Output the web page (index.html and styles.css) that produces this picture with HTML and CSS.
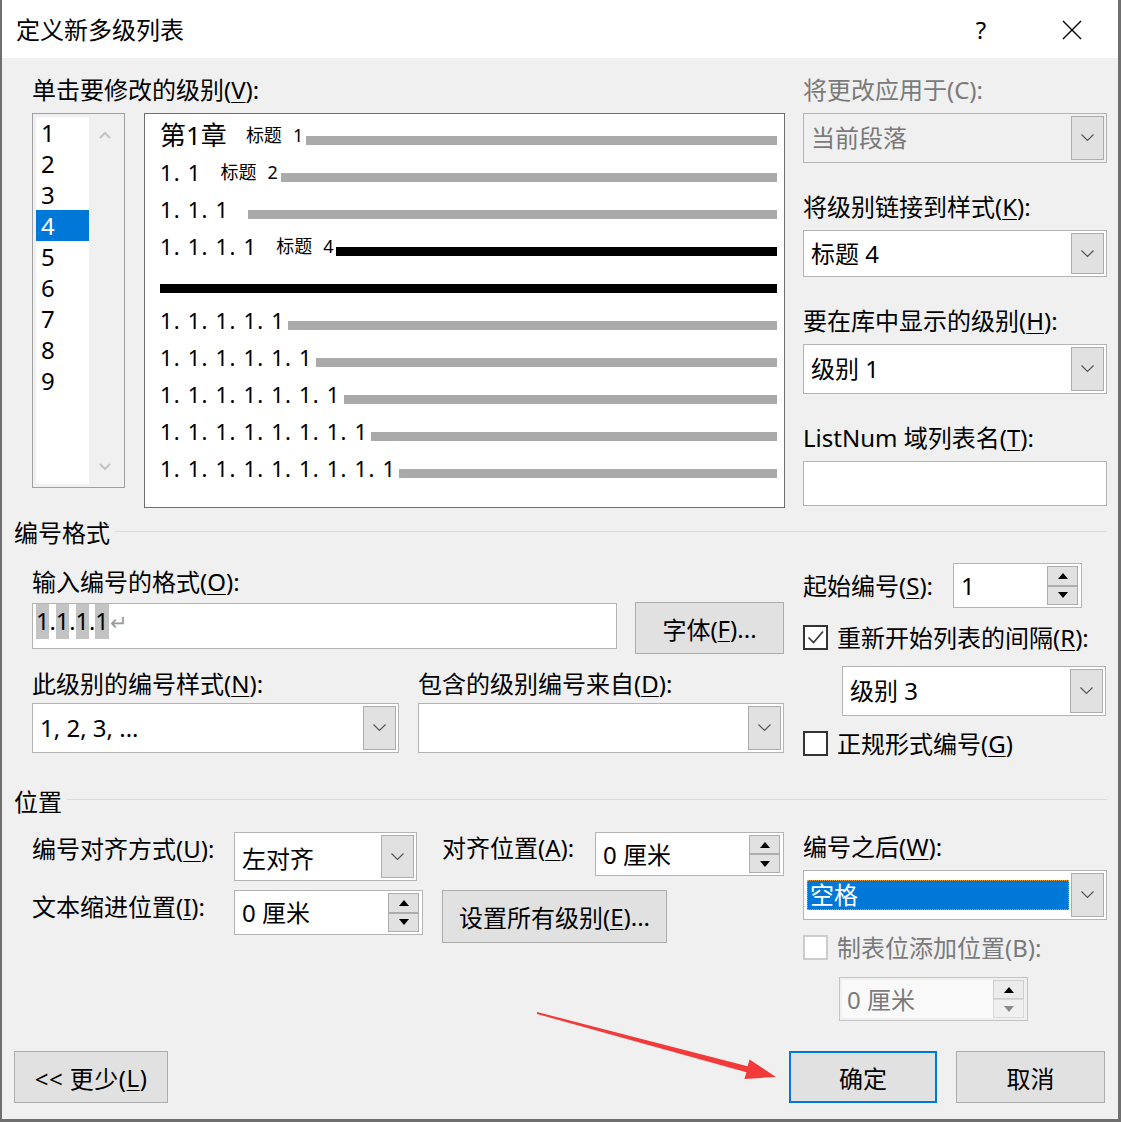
FILE: index.html
```html
<!DOCTYPE html>
<html lang="zh-CN">
  <head>
    <meta charset="UTF-8" />
    <meta name="viewport" content="width=device-width, initial-scale=1.0" />
    <title>定义新多级列表</title>
    <link rel="stylesheet" href="styles.css">
  </head>
  <body>
    <div class="dialog">
      <header class="titlebar">
        <span class="title">定义新多级列表</span>
        <span class="help">?</span>
        <span class="close">
          <svg width="20" height="20" viewBox="0 0 20 20"><path d="M1 1L19 19M19 1L1 19" stroke="#000" stroke-width="1.4" fill="none"/></svg>
        </span>
      </header>

      <main class="content">
        <!-- Level list, preview and style links -->
        <section class="top">
          <div class="col-left">
            <div class="label">单击要修改的级别(<u>V</u>):</div>
            <div class="level-area">
              <div class="listbox">
                <ul class="levels">
                  <li>1</li>
                  <li>2</li>
                  <li>3</li>
                  <li class="selected">4</li>
                  <li>5</li>
                  <li>6</li>
                  <li>7</li>
                  <li>8</li>
                  <li>9</li>
                </ul>
                <div class="scroll">
                  <svg width="12" height="8" viewBox="0 0 12 8"><path d="M1 7L6 2L11 7" stroke="#c3c3c3" stroke-width="2" fill="none"/></svg>
                  <svg width="12" height="8" viewBox="0 0 12 8"><path d="M1 1L6 6L11 1" stroke="#c3c3c3" stroke-width="2" fill="none"/></svg>
                </div>
              </div>
              <div class="preview">
                <div class="pv-row"><span class="pv-chapter">第1章</span><span class="pv-style">标题<span class="pv-lv">1</span></span><span class="bar"></span></div>
                <div class="pv-row"><span class="pv-num">1. 1</span><span class="pv-style">标题<span class="pv-lv">2</span></span><span class="bar"></span></div>
                <div class="pv-row"><span class="pv-num">1. 1. 1</span><span class="bar spaced"></span></div>
                <div class="pv-row"><span class="pv-num">1. 1. 1. 1</span><span class="pv-style">标题<span class="pv-lv">4</span></span><span class="bar current"></span></div>
                <div class="pv-row"><span class="bar current full"></span></div>
                <div class="pv-row"><span class="pv-num">1. 1. 1. 1. 1</span><span class="bar"></span></div>
                <div class="pv-row"><span class="pv-num">1. 1. 1. 1. 1. 1</span><span class="bar"></span></div>
                <div class="pv-row"><span class="pv-num">1. 1. 1. 1. 1. 1. 1</span><span class="bar"></span></div>
                <div class="pv-row"><span class="pv-num">1. 1. 1. 1. 1. 1. 1. 1</span><span class="bar"></span></div>
                <div class="pv-row"><span class="pv-num">1. 1. 1. 1. 1. 1. 1. 1. 1</span><span class="bar"></span></div>
              </div>
            </div>
          </div>

          <div class="col-right">
            <div class="label disabled">将更改应用于(C):</div>
            <div class="combo disabled field">
              <span class="combo-value">当前段落</span>
              <span class="combo-btn"><svg width="13" height="8" viewBox="0 0 13 8"><path d="M0.5 0.5L6.5 6.5L12.5 0.5" stroke="#555" stroke-width="1.2" fill="none"/></svg></span>
            </div>
            <div class="label spaced">将级别链接到样式(<u>K</u>):</div>
            <div class="combo compact field">
              <span class="combo-value">标题 4</span>
              <span class="combo-btn"><svg width="13" height="8" viewBox="0 0 13 8"><path d="M0.5 0.5L6.5 6.5L12.5 0.5" stroke="#555" stroke-width="1.2" fill="none"/></svg></span>
            </div>
            <div class="label spaced">要在库中显示的级别(<u>H</u>):</div>
            <div class="combo field">
              <span class="combo-value">级别 1</span>
              <span class="combo-btn"><svg width="13" height="8" viewBox="0 0 13 8"><path d="M0.5 0.5L6.5 6.5L12.5 0.5" stroke="#555" stroke-width="1.2" fill="none"/></svg></span>
            </div>
            <div class="label spaced">ListNum 域列表名(<u>T</u>):</div>
            <div class="text-input listnum field"></div>
          </div>
        </section>

        <!-- Number format -->
        <div class="section-head first">编号格式</div>
        <section class="format">
          <div class="col-left">
            <div class="label format-label">输入编号的格式(<u>O</u>):</div>
            <div class="format-row">
              <div class="text-input number-format"><span class="hl">1</span>.<span class="hl">1</span>.<span class="hl">1</span>.<span class="hl">1</span><span class="para">↵</span></div>
              <div class="btn font-btn">字体(<u>F</u>)...</div>
            </div>
            <div class="label-row">
              <div class="label style-label">此级别的编号样式(<u>N</u>):</div>
              <div class="label">包含的级别编号来自(<u>D</u>):</div>
            </div>
            <div class="combo-row">
              <div class="combo number-style">
                <span class="combo-value">1, 2, 3, ...</span>
                <span class="combo-btn"><svg width="13" height="8" viewBox="0 0 13 8"><path d="M0.5 0.5L6.5 6.5L12.5 0.5" stroke="#555" stroke-width="1.2" fill="none"/></svg></span>
              </div>
              <div class="combo include-from">
                <span class="combo-value"></span>
                <span class="combo-btn"><svg width="13" height="8" viewBox="0 0 13 8"><path d="M0.5 0.5L6.5 6.5L12.5 0.5" stroke="#555" stroke-width="1.2" fill="none"/></svg></span>
              </div>
            </div>
          </div>

          <div class="col-right">
            <div class="start-row">
              <div class="label start-label">起始编号(<u>S</u>):</div>
              <div class="spin start-spin">
                <span class="spin-value">1</span>
                <span class="spin-btns"><span class="up"></span><span class="down"></span></span>
              </div>
            </div>
            <div class="check restart">
              <span class="box checked"><svg width="21" height="21" viewBox="0 0 21 21"><path d="M3.5 10.5L8.5 15.5L18 4.5" stroke="#333" stroke-width="1.6" fill="none"/></svg></span>
              <span>重新开始列表的间隔(<u>R</u>):</span>
            </div>
            <div class="combo restart-level">
              <span class="combo-value">级别 3</span>
              <span class="combo-btn"><svg width="13" height="8" viewBox="0 0 13 8"><path d="M0.5 0.5L6.5 6.5L12.5 0.5" stroke="#555" stroke-width="1.2" fill="none"/></svg></span>
            </div>
            <div class="check legal">
              <span class="box"></span>
              <span>正规形式编号(<u>G</u>)</span>
            </div>
          </div>
        </section>

        <!-- Position -->
        <div class="section-head second">位置</div>
        <section class="position">
          <div class="col-left">
            <div class="pos-row">
              <div class="label pos-label">编号对齐方式(<u>U</u>):</div>
              <div class="combo align-combo">
                <span class="combo-value">左对齐</span>
                <span class="combo-btn"><svg width="13" height="8" viewBox="0 0 13 8"><path d="M0.5 0.5L6.5 6.5L12.5 0.5" stroke="#555" stroke-width="1.2" fill="none"/></svg></span>
              </div>
              <div class="label pos-label at-label">对齐位置(<u>A</u>):</div>
              <div class="spin at-spin">
                <span class="spin-value">0 厘米</span>
                <span class="spin-btns"><span class="up"></span><span class="down"></span></span>
              </div>
            </div>
            <div class="pos-row second-row">
              <div class="label pos-label indent-label">文本缩进位置(<u>I</u>):</div>
              <div class="spin indent-spin">
                <span class="spin-value">0 厘米</span>
                <span class="spin-btns"><span class="up"></span><span class="down"></span></span>
              </div>
              <div class="btn all-levels">设置所有级别(<u>E</u>)...</div>
            </div>
          </div>

          <div class="col-right">
            <div class="label after-label">编号之后(<u>W</u>):</div>
            <div class="combo follow-combo">
              <span class="combo-value selected">空格</span>
              <span class="combo-btn"><svg width="13" height="8" viewBox="0 0 13 8"><path d="M0.5 0.5L6.5 6.5L12.5 0.5" stroke="#555" stroke-width="1.2" fill="none"/></svg></span>
            </div>
            <div class="check disabled tab-check">
              <span class="box"></span>
              <span>制表位添加位置(B):</span>
            </div>
            <div class="spin disabled tab-spin">
              <span class="spin-value">0 厘米</span>
              <span class="spin-btns"><span class="up"></span><span class="down"></span></span>
            </div>
          </div>
        </section>

        <footer class="footer">
          <div class="btn less">&lt;&lt; 更少(<u>L</u>)</div>
          <div class="btn default ok">确定</div>
          <div class="btn cancel">取消</div>
        </footer>
      </main>
    </div>

    <svg class="arrow" width="1121" height="1122" viewBox="0 0 1121 1122">
      <polygon points="537,1012 747.6,1066.2 749.6,1059.5 776,1077 744.4,1078.9 746.4,1072.2 537,1014" fill="#f23a3a"/>
    </svg>
  </body>
</html>
```

FILE: styles.css
```css
* {
  box-sizing: border-box;
}

body {
  margin: 0;
  position: relative;
  background-color: #fff;
  font-family: "Noto Sans", "Noto Sans CJK SC", sans-serif;
  color: #000;
}

u {
  text-decoration-thickness: 1px;
  text-underline-offset: 3px;
}

.dialog {
  width: 1121px;
  height: 1122px;
  background-color: #f0f0f0;
  border-style: solid;
  border-color: #6f6f6f;
  border-width: 0 3px 3px 2px;
  overflow: hidden;
}

/* Title bar */
.titlebar {
  display: flex;
  align-items: center;
  height: 58px;
  background-color: #fff;
  padding: 2px 23px 0 14px;
}

.title {
  font-size: 24px;
  line-height: 30px;
}

.help {
  margin-left: auto;
  width: 32px;
  text-align: center;
  font-size: 24px;
  line-height: 30px;
}

.close {
  display: flex;
  justify-content: center;
  width: 46px;
  margin-left: 52px;
}

.content {
  padding: 0 11px 0 12px;
}

.label {
  font-size: 24px;
  line-height: 30px;
  white-space: nowrap;
}

.label.disabled,
.check.disabled {
  color: #7a7a7a;
}

.col-left {
  width: 753px;
}

.col-right {
  width: 304px;
  margin-left: 18px;
}

/* Top area */
.top {
  display: flex;
  padding: 17px 0 0 18px;
}

.level-area {
  display: flex;
  align-items: flex-start;
  margin-top: 8px;
}

.listbox {
  display: flex;
  width: 93px;
  height: 375px;
  padding: 3px;
  border: 1px solid #a0a0a0;
  background-color: #f0f0f0;
}

.levels {
  list-style: none;
  margin: 0;
  padding: 0;
  width: 53px;
  background-color: #fff;
}

.levels li {
  height: 31px;
  line-height: 31px;
  font-size: 24px;
  padding-left: 5px;
}

.levels li.selected {
  background-color: #0078d7;
  color: #fff;
}

.scroll {
  flex: 1;
  display: flex;
  flex-direction: column;
  justify-content: space-between;
  align-items: center;
  padding: 14px 0 13px;
}

.scroll svg {
  display: block;
}

.preview {
  width: 641px;
  height: 395px;
  margin-left: 19px;
  padding: 3px 7px 0 15px;
  background-color: #fff;
  border: 1px solid #6e6e6e;
}

.pv-row {
  display: flex;
  align-items: center;
  height: 37px;
  line-height: 37px;
  font-size: 22px;
  white-space: nowrap;
}

.pv-num {
  letter-spacing: 1.2px;
}

.pv-chapter {
  font-size: 26px;
}

.pv-style {
  font-size: 18px;
  margin-left: 19px;
}

.pv-lv {
  margin-left: 11px;
}

.bar {
  flex: 1;
  height: 9px;
  margin: 10px 0 0 3px;
  background-color: #aaa;
}

.bar.spaced {
  margin-left: 19px;
}

.bar.current {
  background-color: #000;
}

.bar.full {
  margin-left: 0;
}

/* Right column fields */
.col-right .field {
  margin-top: 8px;
}

.col-right .label.spaced {
  margin-top: 29px;
}

.combo {
  display: flex;
  height: 50px;
  padding: 2px;
  background-color: #fff;
  border: 1px solid #b4b4b4;
}

.combo.compact {
  height: 47px;
}

.combo.disabled {
  background-color: #f0f0f0;
  color: #7a7a7a;
}

.combo-value {
  flex: 1;
  padding-left: 5px;
  font-size: 24px;
  line-height: 44px;
  white-space: nowrap;
}

.combo.compact .combo-value {
  line-height: 41px;
}

.combo-value.selected {
  margin: 7px 2px 7px 1px;
  padding-left: 3px;
  line-height: 30px;
  background-color: #0078d7;
  color: #fff;
  outline: 1px dotted #e89b3c;
  outline-offset: -1px;
}

.combo-btn {
  display: flex;
  align-items: center;
  justify-content: center;
  width: 33px;
  background-color: #e1e1e1;
  border: 1px solid #adadad;
}

.text-input {
  background-color: #fff;
  border: 1px solid #b4b4b4;
}

.listnum {
  height: 45px;
}

/* Section headings */
.section-head {
  display: flex;
  align-items: center;
  font-size: 24px;
  line-height: 30px;
}

.section-head::after {
  content: "";
  flex: 1;
  height: 1px;
  margin-left: 5px;
  background-color: #dcdcdc;
}

.section-head.first {
  margin-top: 10px;
}

.section-head.first::after {
  margin-bottom: 4px;
}

.section-head.second {
  margin-top: 31px;
}

.section-head.second::after {
  margin-bottom: 6px;
}

/* Number format */
.format,
.position {
  display: flex;
  padding-left: 18px;
}

.format-label {
  margin-top: 19px;
}

.format-row {
  display: flex;
  align-items: flex-start;
  margin-top: 5px;
}

.number-format {
  width: 585px;
  height: 46px;
  margin-top: 1px;
  padding-left: 3px;
  font-size: 23.5px;
  line-height: 35px;
  white-space: nowrap;
}

.hl {
  display: inline-block;
  background-color: #c3c3c3;
  line-height: 35px;
}

.para {
  margin-left: 1px;
  font-size: 21px;
  color: #9a9a9a;
}

.btn {
  display: flex;
  align-items: center;
  justify-content: center;
  height: 52px;
  font-size: 24px;
  white-space: nowrap;
  background-color: #e1e1e1;
  border: 1px solid #adadad;
}

.btn.default {
  border: 2px solid #0078d7;
}

.font-btn {
  width: 149px;
  margin-left: 18px;
}

.label-row {
  display: flex;
  margin-top: 15px;
}

.style-label {
  width: 386px;
}

.combo-row {
  display: flex;
  gap: 19px;
  margin-top: 4px;
}

.number-style {
  width: 367px;
}

.include-from {
  width: 366px;
}

.start-row {
  display: flex;
  align-items: center;
  margin-top: 15px;
}

.start-label {
  width: 150px;
}

.spin {
  display: flex;
  height: 45px;
  padding: 2px 3px 2px 2px;
  background-color: #fff;
  border: 1px solid #b4b4b4;
}

.spin-value {
  flex: 1;
  padding-left: 5px;
  font-size: 24px;
  line-height: 39px;
  white-space: nowrap;
}

.spin-btns {
  display: flex;
  flex-direction: column;
  width: 31px;
}

.spin-btns span {
  flex: 1;
  display: flex;
  align-items: center;
  justify-content: center;
  background-color: #e1e1e1;
  border: 1px solid #adadad;
}

.spin-btns .up::before,
.spin-btns .down::before {
  content: "";
  border-left: 5px solid transparent;
  border-right: 5px solid transparent;
}

.spin-btns .up::before {
  border-bottom: 6px solid #000;
}

.spin-btns .down::before {
  border-top: 6px solid #000;
}

.spin.disabled {
  background-color: #f0f0f0;
  border-color: #c4c4c4;
  color: #7a7a7a;
}

.spin.disabled .spin-value {
  background-color: #f9f9f9;
}

.spin.disabled .spin-btns span {
  background-color: #ececec;
  border-color: #cfcfcf;
}

.spin.disabled .spin-btns .down {
  background-color: #f0f0f0;
  border-color: #dadada;
}

.spin.disabled .spin-btns .down::before {
  border-top-color: #8a8a8a;
}

.start-spin {
  width: 129px;
}

.check {
  display: flex;
  align-items: center;
  height: 25px;
  font-size: 24px;
  line-height: 30px;
  white-space: nowrap;
}

.box {
  display: flex;
  align-items: center;
  justify-content: center;
  width: 25px;
  height: 25px;
  margin-right: 9px;
  background-color: #fff;
  border: 2px solid #333;
}

.check.disabled .box {
  border-color: #cccccc;
}

.restart {
  margin-top: 17px;
}

.restart-level {
  width: 264px;
  margin: 16px 0 0 39px;
}

.legal {
  margin-top: 15px;
}

/* Position */
.pos-row {
  display: flex;
  align-items: flex-start;
  margin-top: 15px;
}

.pos-row.second-row {
  margin-top: 9px;
}

.pos-label {
  width: 202px;
  margin-top: 2px;
}

.indent-label {
  margin-top: 2px;
}

.align-combo {
  width: 183px;
  height: 49px;
}

.align-combo .combo-value {
  line-height: 47px;
}

.at-label {
  width: 153px;
  margin-left: 25px;
  margin-top: 1px;
}

.at-spin {
  width: 189px;
  height: 44px;
}

.indent-spin {
  width: 189px;
}

.all-levels {
  width: 225px;
  height: 53px;
  margin-left: 19px;
}

.after-label {
  margin-top: 15px;
}

.follow-combo {
  margin-top: 8px;
}

.tab-check {
  margin-top: 15px;
}

.tab-spin {
  width: 189px;
  height: 44px;
  margin: 17px 0 0 36px;
}

/* Footer buttons */
.footer {
  display: flex;
  margin-top: 30px;
}

.less {
  width: 154px;
  letter-spacing: 0.5px;
}

.ok {
  width: 148px;
  margin-left: auto;
}

.cancel {
  width: 149px;
  margin: 0 2px 0 19px;
}

.arrow {
  position: absolute;
  left: 0;
  top: 0;
  pointer-events: none;
}
```
